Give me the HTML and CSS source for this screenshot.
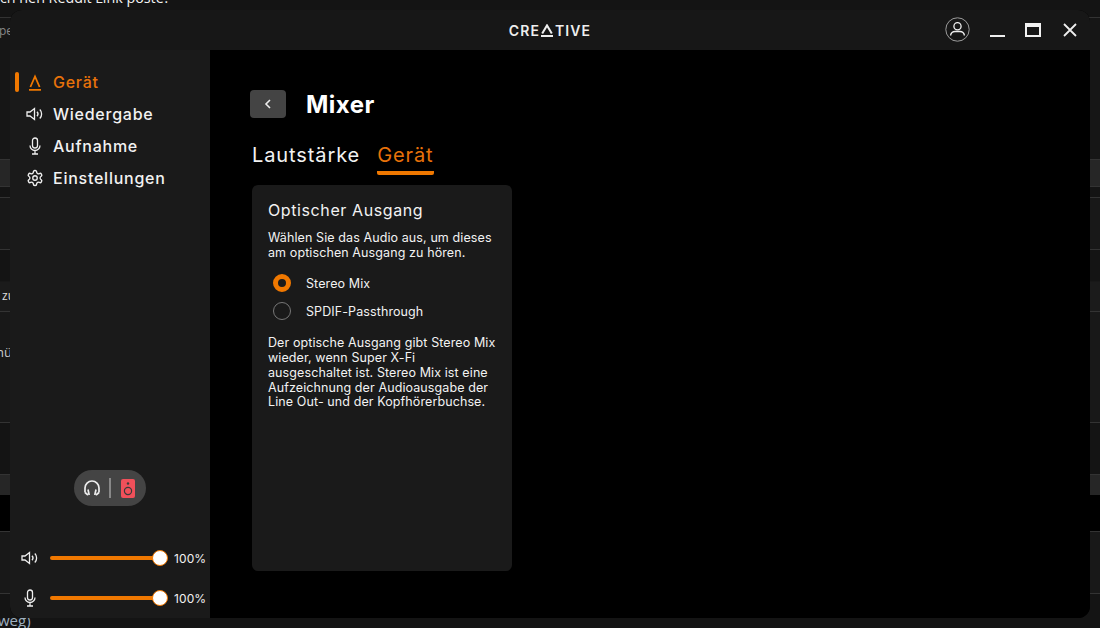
FILE: index.html
```html
<!DOCTYPE html>
<html lang="de">
<head>
    <meta charset="UTF-8">
    <meta name="viewport" content="width=device-width, initial-scale=1.0">
    <title>Creative - Mixer</title>
    <link rel="stylesheet" href="styles.css">
</head>
<body>
    <!-- page behind the app window -->
    <div class="backdrop">
        <div class="row row-top"><span class="top-text">ch nen Reddit Link poste?</span></div>
        <div class="row row-a"><span class="frag frag-pe">pe</span></div>
        <div class="row row-light r27"></div>
        <div class="row row-dark r11"></div>
        <div class="row row-a r52"></div>
        <div class="row row-dark r32"></div>
        <div class="row row-b r30"><span class="frag frag-zu">zu</span></div>
        <div class="row row-a r111"><span class="frag frag-nu">nü</span></div>
        <div class="row row-dark r52"></div>
        <div class="row row-light r21"></div>
        <div class="row row-black r36"></div>
        <div class="row row-a r62"></div>
        <div class="row row-dark r35"><span class="frag frag-weg">weg)</span></div>
    </div>

    <div class="window">
        <header class="titlebar">
            <div class="logo">
                <span>CRE</span>
                <svg class="logo-a" width="14" height="13" viewBox="0 0 14 13" fill="none" stroke="#eee" stroke-width="2">
                    <path d="M2.2 9.6 7 1.4l4.8 8.2"/>
                    <path d="M1 12h12"/>
                </svg>
                <span>TIVE</span>
            </div>
            <div class="win-controls">
                <svg class="ctl-user" width="25" height="25" viewBox="0 0 25 25" fill="none" stroke="#eee">
                    <circle cx="12.5" cy="12.5" r="11.7" stroke="#aaa" stroke-width="0.9"/>
                    <circle cx="12.5" cy="9.2" r="3.6" stroke-width="1.3"/>
                    <path d="M5.5 18.5c.6-3 3-4 4.5-4h5c1.5 0 3.9 1 4.5 4" stroke-width="1.3"/>
                </svg>
                <span class="ctl-min"></span>
                <span class="ctl-max"></span>
                <svg class="ctl-close" width="14" height="14" viewBox="0 0 14 14" stroke="#eee" stroke-width="1.8">
                    <path d="M1 1l12 12M13 1 1 13"/>
                </svg>
            </div>
        </header>

        <div class="app-body">
            <aside class="sidebar">
                <nav class="nav">
                    <a class="nav-item active">
                        <span class="nav-bar"></span>
                        <svg width="18" height="18" viewBox="0 0 18 18" fill="none" stroke="#f07800" stroke-width="1.8">
                            <path d="M4.4 14 9 3.5 13.6 14"/>
                            <path d="M3 16.8h12"/>
                        </svg>
                        <span>Gerät</span>
                    </a>
                    <a class="nav-item">
                        <span class="nav-bar"></span>
                        <svg width="18" height="18" viewBox="0 0 18 18" fill="none" stroke="#eee" stroke-width="1.3">
                            <path d="M1 7v4h3l4.5 3.5v-11L4 7z"/>
                            <path d="M11 6.8a3.2 3.2 0 0 1 0 4.4M13.8 4.5a6.5 6.5 0 0 1 0 9"/>
                        </svg>
                        <span>Wiedergabe</span>
                    </a>
                    <a class="nav-item">
                        <span class="nav-bar"></span>
                        <svg width="18" height="18" viewBox="0 0 18 18" fill="none" stroke="#eee" stroke-width="1.3">
                            <rect x="6.5" y="1" width="5" height="10" rx="2.5"/>
                            <path d="M4 8.5a5 5 0 0 0 10 0M9 13.5V17M6 17h6"/>
                        </svg>
                        <span>Aufnahme</span>
                    </a>
                    <a class="nav-item">
                        <span class="nav-bar"></span>
                        <svg width="18" height="18" viewBox="0 0 24 24" fill="none" stroke="#eee" stroke-width="1.8">
                            <path d="M12.22 2h-.44a2 2 0 0 0-2 2v.18a2 2 0 0 1-1 1.73l-.43.25a2 2 0 0 1-2 0l-.15-.08a2 2 0 0 0-2.73.73l-.22.38a2 2 0 0 0 .73 2.73l.15.1a2 2 0 0 1 1 1.72v.51a2 2 0 0 1-1 1.74l-.15.09a2 2 0 0 0-.73 2.73l.22.38a2 2 0 0 0 2.73.73l.15-.08a2 2 0 0 1 2 0l.43.25a2 2 0 0 1 1 1.73V20a2 2 0 0 0 2 2h.44a2 2 0 0 0 2-2v-.18a2 2 0 0 1 1-1.73l.43-.25a2 2 0 0 1 2 0l.15.08a2 2 0 0 0 2.73-.73l.22-.39a2 2 0 0 0-.73-2.73l-.15-.08a2 2 0 0 1-1-1.74v-.5a2 2 0 0 1 1-1.74l.15-.09a2 2 0 0 0 .73-2.73l-.22-.38a2 2 0 0 0-2.73-.73l-.15.08a2 2 0 0 1-2 0l-.43-.25a2 2 0 0 1-1-1.73V4a2 2 0 0 0-2-2z"/>
                            <circle cx="12" cy="12" r="3"/>
                        </svg>
                        <span>Einstellungen</span>
                    </a>
                </nav>

                <div class="output-switch">
                    <svg width="18" height="18" viewBox="0 0 18 18" fill="none" stroke="#eee" stroke-width="1.7">
                        <path d="M2 13.5V9a7 7 0 0 1 14 0v4.5"/>
                        <path d="M5 10.5 6.2 16M13 10.5 11.8 16"/>
                        <path d="M2 13.5l3 2.5M16 13.5l-3 2.5"/>
                    </svg>
                    <span class="switch-line"></span>
                    <svg width="14" height="19" viewBox="0 0 14 19">
                        <rect width="14" height="19" rx="2" fill="#f0505a"/>
                        <circle cx="7" cy="4.5" r="1.2" fill="#3a3a3a"/>
                        <circle cx="7" cy="12" r="3.6" fill="none" stroke="#3a3a3a" stroke-width="1.2"/>
                    </svg>
                </div>

                <div class="slider-row">
                    <svg width="18" height="18" viewBox="0 0 18 18" fill="none" stroke="#eee" stroke-width="1.3">
                        <path d="M1 7v4h3l4.5 3.5v-11L4 7z"/>
                        <path d="M11 6.8a3.2 3.2 0 0 1 0 4.4M13.8 4.5a6.5 6.5 0 0 1 0 9"/>
                    </svg>
                    <div class="track"><span class="knob"></span></div>
                    <span class="percent">100%</span>
                </div>
                <div class="slider-row">
                    <svg width="18" height="18" viewBox="0 0 18 18" fill="none" stroke="#eee" stroke-width="1.3">
                        <rect x="6.5" y="1" width="5" height="10" rx="2.5"/>
                        <path d="M4 8.5a5 5 0 0 0 10 0M9 13.5V17M6 17h6"/>
                    </svg>
                    <div class="track"><span class="knob"></span></div>
                    <span class="percent">100%</span>
                </div>
            </aside>

            <main class="content">
                <div class="page-head">
                    <button class="back-btn">
                        <svg width="10" height="12" viewBox="0 0 10 12" fill="none" stroke="#eee" stroke-width="1.6">
                            <path d="M7 2 3 6l4 4"/>
                        </svg>
                    </button>
                    <h1>Mixer</h1>
                </div>

                <div class="tabs">
                    <span class="tab">Lautstärke</span>
                    <span class="tab active">Gerät</span>
                </div>

                <section class="card">
                    <h2>Optischer Ausgang</h2>
                    <p>Wählen Sie das Audio aus, um dieses<br>am optischen Ausgang zu hören.</p>
                    <div class="radio-list">
                        <div class="radio-item">
                            <span class="radio checked"></span>
                            <span>Stereo Mix</span>
                        </div>
                        <div class="radio-item">
                            <span class="radio"></span>
                            <span>SPDIF-Passthrough</span>
                        </div>
                    </div>
                    <p>Der optische Ausgang gibt Stereo Mix<br>wieder, wenn Super X-Fi<br>ausgeschaltet ist. Stereo Mix ist eine<br>Aufzeichnung der Audioausgabe der<br>Line Out- und der Kopfhörerbuchse.</p>
                </section>
            </main>
        </div>
    </div>
</body>
</html>
```

FILE: styles.css
```css
* {
    box-sizing: border-box;
}
body {
    margin: 0;
    width: 1100px;
    height: 628px;
    overflow: hidden;
    position: relative;
    background: #141414;
    color: #f2f2f2;
    font-family: Inter, "Open Sans", sans-serif;
}

/* backdrop */
.backdrop {
    display: flex;
    flex-direction: column;
    height: 628px;
    font-family: "Open Sans", sans-serif;
}
.row {
    border-top: 1px solid #333;
    overflow: hidden;
    flex: none;
}
.row-top {
    height: 17px;
    border-top: 0;
    background: #141414;
}
.row-a {
    background: #181818;
}
.row-b {
    background: #1b1b1b;
    border-top-color: #181818;
}
.row-light {
    background: #262626;
}
.row-dark {
    background: #141414;
}
.row-black {
    background: #000;
    border-top: 0;
}
.row-a:nth-child(2) {
    height: 142px;
    background: #161616;
}
.r11 { height: 11px; }
.r21 { height: 21px; }
.r27 { height: 27px; }
.r30 { height: 30px; }
.r32 { height: 32px; }
.r35 { height: 35px; }
.r36 { height: 36px; }
.r52 { height: 52px; }
.r62 { height: 62px; }
.r111 { height: 111px; }
.top-text {
    display: block;
    margin-top: -11px;
    font-size: 14.3px;
    line-height: 18px;
    white-space: nowrap;
    color: #f2f2f2;
}
.frag {
    display: block;
    font-size: 12px;
    line-height: 16px;
    white-space: nowrap;
    color: #bbb;
}
.frag-pe {
    margin: 5px 0 0 -1px;
    color: #888;
}
.frag-zu {
    margin: 6px 0 0 2px;
    color: #ddd;
}
.frag-nu {
    margin: 32px 0 0 -4px;
    font-size: 13px;
    color: #ccc;
}
.frag-weg {
    margin: 16px 0 0 -2px;
    font-size: 15px;
    line-height: 20px;
    color: #9fb0c0;
}

/* app window */
.window {
    position: absolute;
    left: 10px;
    top: 10px;
    width: 1080px;
    height: 608px;
    border-radius: 12px;
    overflow: hidden;
    display: flex;
    flex-direction: column;
    background: #000;
}
.titlebar {
    height: 40px;
    flex: none;
    background: #171717;
    display: flex;
    align-items: center;
    justify-content: center;
    position: relative;
}
.logo {
    display: flex;
    align-items: center;
    font-size: 14px;
    font-weight: 600;
    letter-spacing: 1.1px;
    color: #eee;
}
.logo-a {
    margin: 1px 1px 0 0;
}
.win-controls {
    position: absolute;
    right: 13px;
    top: 7px;
    display: flex;
    align-items: center;
}
.ctl-user {
    margin-right: 20px;
}
.ctl-min {
    width: 15px;
    height: 2px;
    margin: 12px 20px 0 0;
    background: #eee;
}
.ctl-max {
    width: 16px;
    height: 14px;
    border: 2px solid #f2f2f2;
    border-top-width: 4px;
    margin-right: 22px;
}
.app-body {
    flex: 1;
    display: flex;
    min-height: 0;
}

/* sidebar */
.sidebar {
    width: 200px;
    flex: none;
    background: #1a1a1a;
    padding-top: 16px;
    display: flex;
    flex-direction: column;
}
.nav {
    display: flex;
    flex-direction: column;
}
.nav-item {
    height: 32px;
    display: flex;
    align-items: center;
    padding-left: 5px;
    font-size: 16px;
    font-weight: 500;
    letter-spacing: 0.75px;
    color: #f2f2f2;
}
.nav-item svg {
    margin: 0 9px 0 7px;
}
.nav-bar {
    width: 4px;
    height: 20px;
    border-radius: 2px;
}
.nav-item.active {
    color: #e8720a;
}
.nav-item.active .nav-bar {
    background: #f07800;
}
.output-switch {
    width: 72px;
    height: 36px;
    margin: 276px 0 0 64px;
    border-radius: 18px;
    background: #444;
    display: flex;
    align-items: center;
    padding-left: 9px;
}
.switch-line {
    width: 2px;
    height: 20px;
    margin: 0 10px 0 8px;
    background: #888;
}
.slider-row {
    display: flex;
    align-items: center;
    height: 20px;
    margin-top: 20px;
    padding-left: 11px;
}
.output-switch + .slider-row {
    margin-top: 42px;
}
.slider-row svg {
    flex: none;
}
.track {
    position: relative;
    width: 110px;
    height: 4px;
    margin-left: 11px;
    border-radius: 2px;
    background: #f07800;
}
.knob {
    position: absolute;
    right: -8px;
    top: -6px;
    width: 16px;
    height: 16px;
    border-radius: 50%;
    background: #fff;
    border: 1px solid #f07800;
}
.percent {
    margin-left: 14px;
    font-size: 12px;
    letter-spacing: 0.1px;
    color: #f2f2f2;
}

/* main panel */
.content {
    flex: 1;
    background: #000;
    padding: 40px 0 0 40px;
}
.page-head {
    display: flex;
    align-items: center;
    gap: 20px;
    height: 28px;
}
.back-btn {
    width: 36px;
    height: 28px;
    padding: 0;
    border: 0;
    border-radius: 4px;
    background: #444;
    display: flex;
    align-items: center;
    justify-content: center;
}
h1 {
    margin: 2px 0 0;
    font-size: 24px;
    line-height: 28px;
    font-weight: 700;
    letter-spacing: 0.5px;
    color: #fff;
}
.tabs {
    display: flex;
    gap: 17px;
    margin: 23px 0 0 2px;
    height: 34px;
}
.tab {
    height: 34px;
    font-size: 20px;
    line-height: 28px;
    letter-spacing: 0.9px;
    color: #f2f2f2;
}
.tab.active {
    color: #e8720a;
    border-bottom: 4px solid #f07800;
    border-radius: 0 0 2px 2px;
}
.card {
    width: 260px;
    height: 386px;
    margin: 10px 0 0 2px;
    padding: 15px 16px;
    border-radius: 6px;
    background: #1a1a1a;
}
h2 {
    margin: 0 0 11px;
    font-size: 16px;
    line-height: 20px;
    font-weight: 400;
    letter-spacing: 0.6px;
    color: #f2f2f2;
}
.card p {
    margin: 0;
    font-size: 12.5px;
    line-height: 14.7px;
    letter-spacing: 0.1px;
    color: #f2f2f2;
}
.radio-list {
    margin: 14px 0 16px 5px;
    display: flex;
    flex-direction: column;
    gap: 10px;
}
.radio-item {
    display: flex;
    align-items: center;
    gap: 15px;
    height: 18px;
    font-size: 12.5px;
    letter-spacing: 0.1px;
}
.radio {
    width: 18px;
    height: 18px;
    border-radius: 50%;
    border: 1px solid #777;
    flex: none;
}
.radio.checked {
    border: 5px solid #f07800;
    background: #1a1a1a;
}
```
